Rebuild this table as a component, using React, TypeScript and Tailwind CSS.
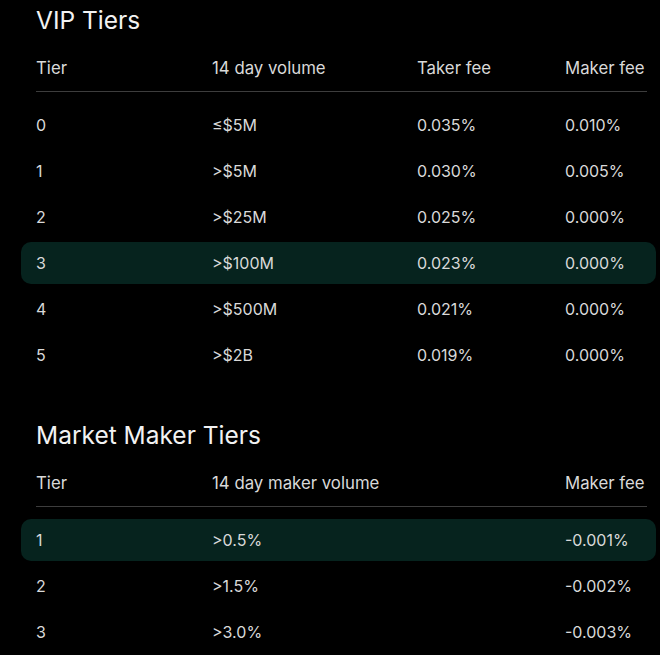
import React from "react";

type Row = { cells: string[]; hl?: boolean };

const vipRows: Row[] = [
  { cells: ["0", "≤$5M", "0.035%", "0.010%"] },
  { cells: ["1", ">$5M", "0.030%", "0.005%"] },
  { cells: ["2", ">$25M", "0.025%", "0.000%"] },
  { cells: ["3", ">$100M", "0.023%", "0.000%"], hl: true },
  { cells: ["4", ">$500M", "0.021%", "0.000%"] },
  { cells: ["5", ">$2B", "0.019%", "0.000%"] },
];

const mmRows: Row[] = [
  { cells: ["1", ">0.5%", "", "-0.001%"], hl: true },
  { cells: ["2", ">1.5%", "", "-0.002%"] },
  { cells: ["3", ">3.0%", "", "-0.003%"] },
];

function Section({ title, headers, rows }: { title: string; headers: string[]; rows: Row[] }) {
  return (
    <div className="flex flex-col">
      <h2 className="text-[24.5px] leading-[32px] text-[#f2f2f2] font-normal">{title}</h2>
      <div className="mt-[20px] grid grid-cols-[176px_205px_148px_1fr] pb-[11px] border-b border-[#3d3d3d] text-[16.8px] leading-[24px] text-[#d9d9d9]">
        {headers.map((h, i) => (
          <div key={i} className="whitespace-nowrap">{h}</div>
        ))}
      </div>
      <div className="mt-[12px] flex flex-col gap-[4px]">
        {rows.map((r, i) => (
          <div
            key={i}
            className={
              r.hl
                ? "-ml-[15px] -mr-[9px] pl-[15px] pr-[9px] h-[42px] rounded-[10px] bg-[#06231e] grid grid-cols-[176px_205px_148px_1fr] items-center text-[16px] text-[#d9d9d9]"
                : "h-[42px] grid grid-cols-[176px_205px_148px_1fr] items-center text-[16px] text-[#d9d9d9]"
            }
          >
            {r.cells.map((c, j) => (
              <div key={j} className="whitespace-nowrap">{c}</div>
            ))}
          </div>
        ))}
      </div>
    </div>
  );
}

export default function App() {
  return (
    <div
      className="w-[660px] h-[655px] bg-black overflow-hidden pl-[36px] pr-[13px] pt-[4px]"
      style={{ fontFamily: "Inter, 'Noto Sans', sans-serif" }}
    >
      <Section
        title="VIP Tiers"
        headers={["Tier", "14 day volume", "Taker fee", "Maker fee"]}
        rows={vipRows}
      />
      <div className="mt-[43px]">
        <Section
          title="Market Maker Tiers"
          headers={["Tier", "14 day maker volume", "", "Maker fee"]}
          rows={mmRows}
        />
      </div>
    </div>
  );
}
